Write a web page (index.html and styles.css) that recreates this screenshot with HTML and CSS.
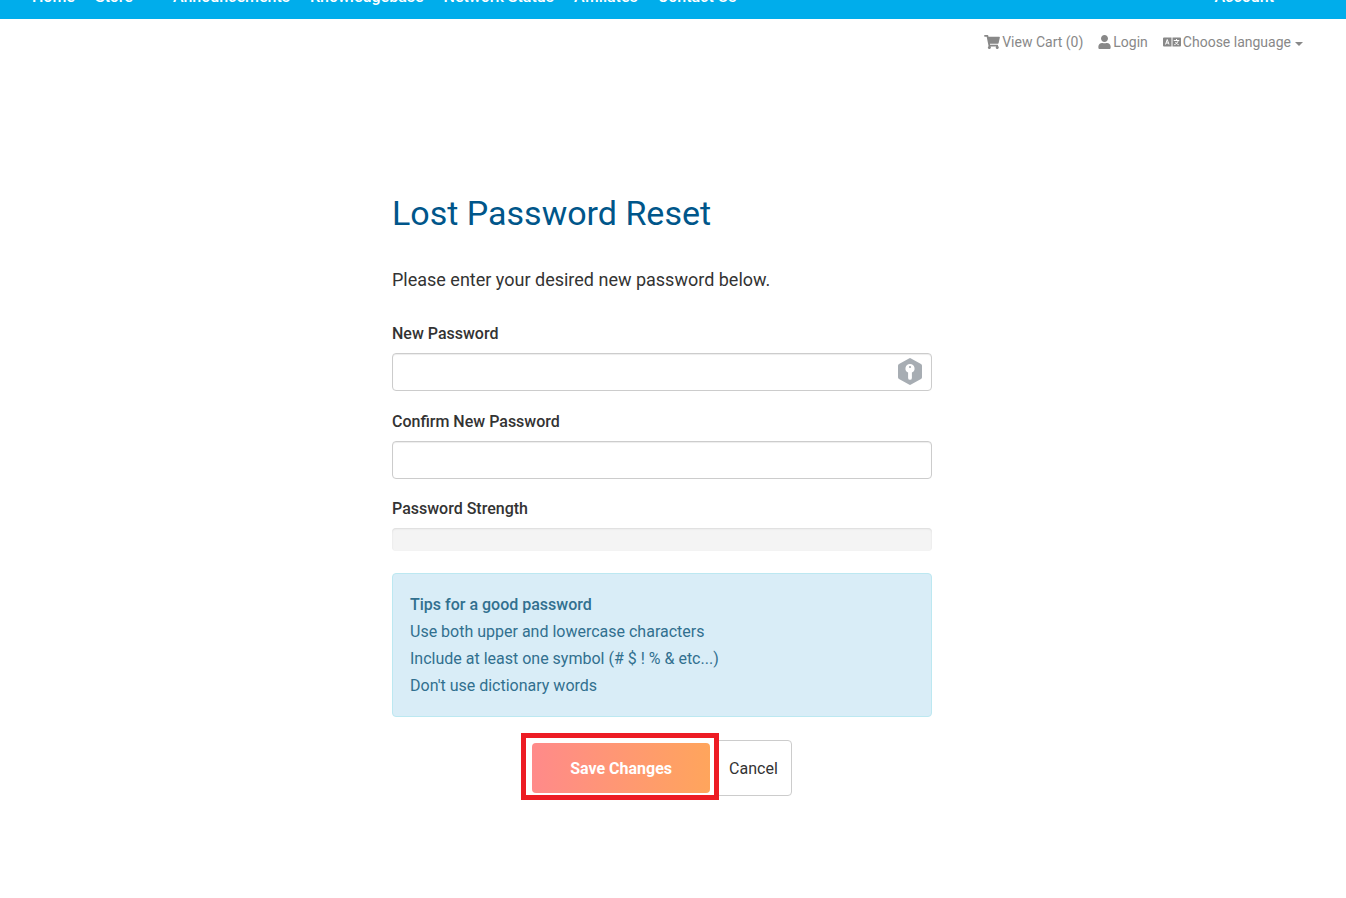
FILE: index.html
```html
<!DOCTYPE html>
<html lang="en">
<head>
<meta charset="utf-8">
<title>Lost Password Reset</title>
<link rel="stylesheet" href="styles.css">
</head>
<body>
<header class="site-header">
  <nav class="main-nav" aria-label="Main">
    <a href="#">Home</a>
    <a href="#" class="has-menu">Store</a>
    <a href="#">Announcements</a>
    <a href="#">Knowledgebase</a>
    <a href="#">Network Status</a>
    <a href="#">Affiliates</a>
    <a href="#">Contact Us</a>
  </nav>
  <a href="#" class="account-link">Account</a>
</header>

<div class="top-links">
  <a href="#">
    <svg class="icon-cart" viewBox="0 0 576 512" aria-hidden="true"><path d="M528.12 301.319l47.273-208C578.806 78.301 567.391 64 551.99 64H159.208l-9.166-44.81C147.758 8.021 137.93 0 126.529 0H24C10.745 0 0 10.745 0 24v16c0 13.255 10.745 24 24 24h69.883l70.248 343.435C147.325 417.1 136 435.222 136 456c0 30.928 25.072 56 56 56s56-25.072 56-56c0-15.674-6.447-29.835-16.824-40h209.647C430.447 426.165 424 440.326 424 456c0 30.928 25.072 56 56 56s56-25.072 56-56c0-22.172-12.888-41.332-31.579-50.405l5.517-24.276c3.413-15.018-8.002-29.319-23.403-29.319H218.117l-6.545-32h293.145c11.206 0 20.92-7.754 23.403-18.681z"/></svg>
    <span>View Cart (0)</span>
  </a>
  <a href="#">
    <svg class="icon-user" viewBox="0 0 448 512" aria-hidden="true"><path d="M224 256c70.7 0 128-57.3 128-128S294.7 0 224 0 96 57.3 96 128s57.3 128 128 128zm89.600 32h-16.700c-22.200 10.200-46.900 16-72.900 16s-50.600-5.800-72.900-16h-16.700C60.200 288 0 348.200 0 422.400V464c0 26.500 21.500 48 48 48h352c26.500 0 48-21.500 48-48v-41.600c0-74.200-60.200-134.400-134.400-134.400z"/></svg>
    <span>Login</span>
  </a>
  <button type="button" class="language">
    <svg class="icon-language" viewBox="0 0 36 20" aria-hidden="true">
      <path d="M2 1h15v18H2a2 2 0 0 1-2-2V3a2 2 0 0 1 2-2zM19 1h15a2 2 0 0 1 2 2v14a2 2 0 0 1-2 2H19z"/>
      <path class="cut" d="M5 15l3.500-10L12 15M6.200 12h4.600M21.500 7h11M27 4v3M30.500 7c-1 4-4 7-8 8.500M25 10c1.500 3 3.500 4.500 6.500 5.500"/>
    </svg>
    <span>Choose language</span>
    <i class="caret"></i>
  </button>
</div>

<main class="page">
  <form class="reset-form">
    <h1>Lost Password Reset</h1>
    <p class="lead">Please enter your desired new password below.</p>

    <div class="field">
      <label for="new-password">New Password</label>
      <div class="input-wrap">
        <input type="password" id="new-password">
        <svg class="key-badge" viewBox="0 0 24 27" aria-hidden="true">
          <path d="M11 .4q1-.600 2 0l10 5.500q1 .600 1 1.800v11.600q0 1.200-1 1.800l-10 5.500q-1 .600-2 0l-10-5.500q-1-.600-1-1.800V7.700q0-1.200 1-1.800z" fill="#a7adb3"/>
          <path d="M12 6a4.500 4.500 0 0 1 1.900 8.600v5.300a1.900 1.900 0 0 1-3.800 0v-5.300A4.500 4.500 0 0 1 12 6z" fill="#fff"/>
          <circle cx="12" cy="9" r="1.100" fill="#a7adb3"/>
        </svg>
      </div>
    </div>

    <div class="field">
      <label for="confirm-password">Confirm New Password</label>
      <input type="password" id="confirm-password">
    </div>

    <div class="meter">
      <span class="label" id="strength-label">Password Strength</span>
      <div class="strength" role="progressbar" aria-labelledby="strength-label" aria-valuemin="0" aria-valuemax="100" aria-valuenow="0"></div>
    </div>

    <div class="tips">
      <strong>Tips for a good password</strong><br>
      Use both upper and lowercase characters<br>
      Include at least one symbol (# $ ! % &amp; etc...)<br>
      Don't use dictionary words
    </div>

    <div class="actions">
      <div class="highlighted">
        <button type="submit" class="save">Save Changes</button>
      </div>
      <button type="reset" class="cancel">Cancel</button>
    </div>
  </form>
</main>
</body>
</html>
```
FILE: styles.css
```css
* {
  box-sizing: border-box;
}

body {
  margin: 0;
  background: #fff;
  color: #333;
  font: 16px/27px Roboto, sans-serif;
}

a {
  color: inherit;
  text-decoration: none;
}

button,
input {
  font: inherit;
}

.site-header {
  display: flex;
  justify-content: space-between;
  align-items: flex-end;
  height: 19px;
  padding: 0 72px 10px 32px;
  background: #00adeb;
  color: #fff;
  font-weight: 500;
  line-height: 24px;
}

.main-nav {
  display: flex;
  gap: 20px;
}

.has-menu {
  padding-right: 20px;
}

.top-links {
  display: flex;
  justify-content: flex-end;
  gap: 15px;
  padding: 13px 43px 0 0;
  color: #888;
  font-size: 14px;
  line-height: 20px;
}

.top-links a,
.language {
  display: flex;
  align-items: center;
  gap: 2px;
}

.top-links svg {
  height: 14px;
  fill: currentColor;
}

.icon-cart {
  width: 16px;
}

.icon-user {
  width: 13px;
}

.icon-language {
  width: 18px;
}

.icon-language .cut {
  fill: none;
  stroke: #fff;
  stroke-width: 2;
}

.language {
  padding: 0;
  border: 0;
  background: none;
  color: inherit;
}

.caret {
  margin: 3px 0 0 2px;
  border: 4px solid transparent;
  border-top-color: currentColor;
  border-bottom: 0;
}

.page {
  padding: 138px 22px 98px 0;
}

.reset-form {
  max-width: 540px;
  margin: 0 auto;
}

h1 {
  margin: 0;
  color: #00568a;
  font-size: 34px;
  font-weight: 400;
  line-height: 46px;
}

.lead {
  margin: 30px 0 27px;
  font-size: 18px;
  line-height: 27px;
}

.field + .field {
  margin-top: 17px;
}

.meter {
  margin-top: 16px;
}

.field label,
.label {
  display: block;
  margin-bottom: 6px;
  font-weight: 500;
}

.input-wrap {
  position: relative;
}

input {
  display: block;
  width: 100%;
  height: 38px;
  padding: 6px 12px;
  border: 1px solid #ccc;
  border-radius: 4px;
  box-shadow: inset 0 1px 1px rgba(0, 0, 0, 0.075);
}

.key-badge {
  position: absolute;
  top: 5px;
  right: 10px;
  width: 24px;
  height: 27px;
}

.strength {
  height: 23px;
  border-radius: 4px;
  background: #f4f4f4;
  box-shadow: inset 0 1px 2px rgba(0, 0, 0, 0.1);
}

.tips {
  margin-top: 22px;
  padding: 17px;
  border: 1px solid #bce8f1;
  border-radius: 4px;
  background: #d9edf7;
  color: #31708f;
}

.tips strong {
  font-weight: 500;
}

.actions {
  display: flex;
  justify-content: center;
  align-items: center;
  gap: 5px;
  margin-top: 23px;
}

.highlighted {
  position: relative;
}

.highlighted::after {
  content: "";
  position: absolute;
  inset: -10px -9px -7px -11px;
  border: 5px solid #ed1c24;
  pointer-events: none;
}

.save {
  display: block;
  height: 50px;
  padding: 0 38px;
  border: 0;
  border-radius: 4px;
  background: linear-gradient(90deg, #ff8a8a, #ffa55c);
  color: #fff;
  font-weight: 700;
}

.cancel {
  height: 56px;
  padding: 0 13px;
  border: 1px solid #ccc;
  border-radius: 4px;
  background: #fff;
  color: #333;
}
```
